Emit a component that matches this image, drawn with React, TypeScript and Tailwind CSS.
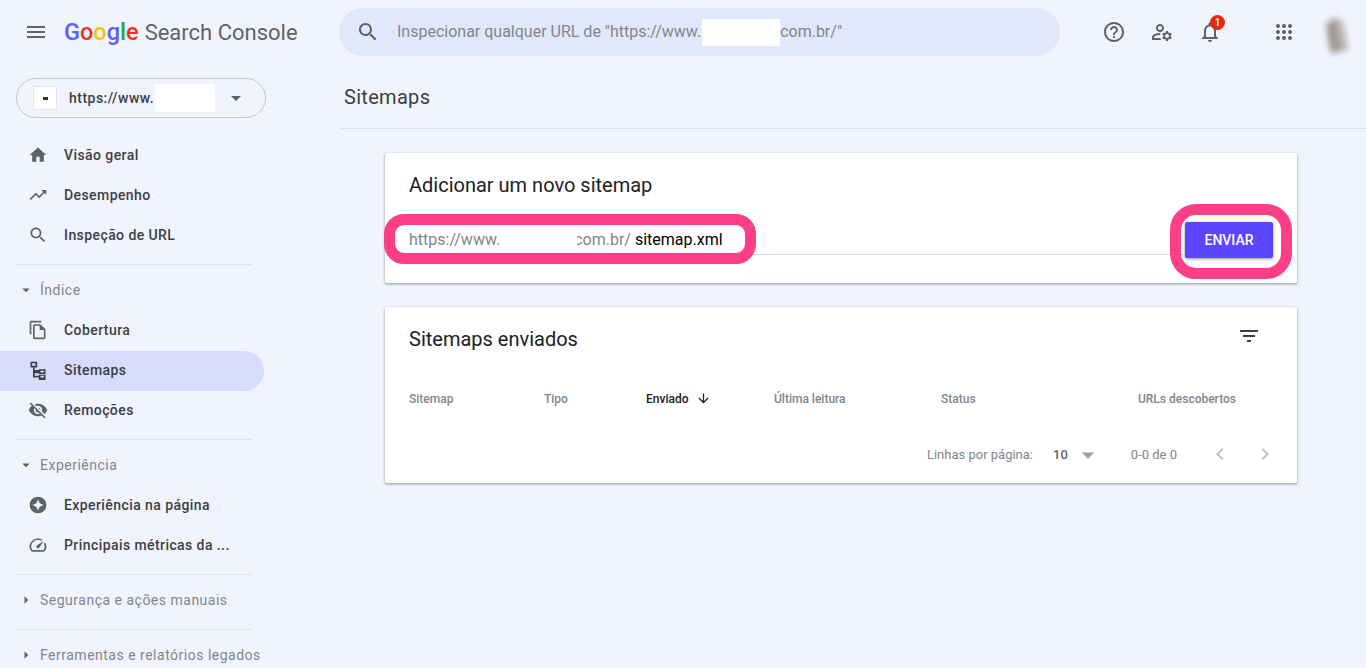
import type { ReactNode } from "react";

const paths = {
  home: "M10 20v-6h4v6h5v-8h3L12 3 2 12h3v8z",
  trend: "M16 6l2.29 2.29-4.88 4.88-4-4L2 16.59 3.41 18l6-6 4 4 6.3-6.29L22 12V6z",
  search: "M15.5 14h-.79l-.28-.27C15.41 12.59 16 11.11 16 9.5 16 5.91 13.09 3 9.5 3S3 5.91 3 9.5 5.91 16 9.5 16c1.61 0 3.09-.59 4.23-1.57l.27.28v.79l5 4.99L20.49 19l-4.99-5zm-6 0C7.01 14 5 11.99 5 9.5S7.01 5 9.5 5 14 7.01 14 9.5 11.99 14 9.5 14z",
  copy: "M16 1H4c-1.1 0-2 .9-2 2v14h2V3h12V1zm-1 4H8c-1.1 0-1.99.9-1.99 2L6 21c0 1.1.89 2 1.99 2H19c1.1 0 2-.9 2-2V11l-6-6zM8 21V7h6v5h5v9H8z",
  sitemap: "M3 2h8v7H8v3h5v-1h8v6h-8v-1H8v3h5v-1h8v6h-8v-3H6V9H3V2zm2 2v3h4V4H5zm10 9v2h4v-2h-4zm0 6v2h4v-2h-4z",
  eyeOff: "M12 7c2.76 0 5 2.24 5 5 0 .65-.13 1.26-.36 1.83l2.92 2.92c1.51-1.26 2.7-2.89 3.43-4.75-1.73-4.39-6-7.5-11-7.5-1.4 0-2.74.25-3.98.7l2.16 2.16C10.74 7.13 11.35 7 12 7zM2 4.27l2.28 2.28.46.46C3.08 8.3 1.78 10.02 1 12c1.73 4.39 6 7.5 11 7.5 1.55 0 3.03-.3 4.38-.84l.42.42L19.73 22 21 20.73 3.27 3 2 4.27zM7.53 9.8l1.55 1.55c-.05.21-.08.43-.08.65 0 1.66 1.34 3 3 3 .22 0 .44-.03.65-.08l1.55 1.55c-.67.33-1.41.53-2.2.53-2.76 0-5-2.24-5-5 0-.79.2-1.53.53-2.2zm4.31-.78l3.15 3.15.02-.16c0-1.66-1.34-3-3-3l-.17.01z",
  star: "M12 2a10 10 0 1 0 0 20 10 10 0 0 0 0-20zm0 3.5l2 4.5 4.5 2-4.5 2-2 4.5-2-4.5-4.5-2 4.5-2z",
  gauge: "M20.38 8.57l-1.23 1.85a8 8 0 0 1-.22 7.58H5.07A8 8 0 0 1 15.58 6.85l1.85-1.23A10 10 0 0 0 3.35 19a2 2 0 0 0 1.72 1h13.85a2 2 0 0 0 1.74-1 10 10 0 0 0-.27-10.44zM10.59 15.41a2 2 0 0 0 2.83 0l5.66-8.49-8.49 5.66a2 2 0 0 0 0 2.83z",
  help: "M11 18h2v-2h-2v2zm1-16C6.48 2 2 6.48 2 12s4.48 10 10 10 10-4.48 10-10S17.52 2 12 2zm0 18c-4.41 0-8-3.59-8-8s3.59-8 8-8 8 3.59 8 8-3.59 8-8 8zm0-14c-2.21 0-4 1.79-4 4h2c0-1.1.9-2 2-2s2 .9 2 2c0 2-3 1.75-3 5h2c0-2.25 3-2.5 3-5 0-2.21-1.79-4-4-4z",
  manage: "M4 18v-.65c0-.34.16-.66.41-.81C6.1 15.53 8.03 15 10 15c.03 0 .05 0 .08.01.1-.7.3-1.37.59-1.98-.22-.02-.44-.03-.67-.03-2.42 0-4.68.67-6.61 1.82-.88.52-1.39 1.5-1.39 2.53V20h9.26c-.42-.6-.75-1.28-.97-2H4zM10 12c2.21 0 4-1.79 4-4s-1.79-4-4-4-4 1.79-4 4 1.79 4 4 4zm0-6c1.1 0 2 .9 2 2s-.9 2-2 2-2-.9-2-2 .9-2 2-2zM20.75 16c0-.22-.03-.42-.06-.63l1.14-1.01-1-1.73-1.45.49c-.32-.27-.68-.48-1.08-.63L18 11h-2l-.3 1.49c-.4.15-.76.36-1.08.63l-1.45-.49-1 1.73 1.14 1.01c-.03.21-.06.41-.06.63s.03.42.06.63l-1.14 1.01 1 1.73 1.45-.49c.32.27.68.48 1.08.63L16 21h2l.3-1.49c.4-.15.76-.36 1.08-.63l1.45.49 1-1.73-1.14-1.01c.03-.21.06-.41.06-.63zM17 18c-1.1 0-2-.9-2-2s.9-2 2-2 2 .9 2 2-.9 2-2 2z",
  bell: "M12 22c1.1 0 2-.9 2-2h-4c0 1.1.9 2 2 2zm6-6v-5c0-3.07-1.63-5.64-4.5-6.32V4c0-.83-.67-1.5-1.5-1.5s-1.5.67-1.5 1.5v.68C7.64 5.36 6 7.92 6 11v5l-2 2v1h16v-1l-2-2zm-2 1H8v-6c0-2.48 1.51-4.5 4-4.5s4 2.02 4 4.5v6z",
  filter: "M10 18h4v-2h-4v2zM3 6v2h18V6H3zm3 7h12v-2H6v2z",
  arrowDown: "M20 12l-1.41-1.41L13 16.17V4h-2v12.17l-5.58-5.59L4 12l8 8 8-8z",
  menu: "M3 18h18v-2H3v2zm0-5h18v-2H3v2zm0-7v2h18V6H3z",
  left: "M15.41 7.41L14 6l-6 6 6 6 1.41-1.41L10.83 12z",
  right: "M10 6L8.59 7.41 13.17 12l-4.58 4.59L10 18l6-6z",
  caretDown: "M7 10l5 5 5-5z",
  caretRight: "M10 17l5-5-5-5z",
};

function Icon({ d, className }: { d: string; className?: string }) {
  return (
    <svg viewBox="0 0 24 24" fill="currentColor" fillRule="evenodd" className={className}>
      <path d={d} />
    </svg>
  );
}

function NavItem({ icon, label, active }: { icon: string; label: string; active?: boolean }) {
  return (
    <div
      className={`flex h-10 w-[264px] items-center rounded-r-full pl-[26px] ${active ? "mt-px -mb-px bg-[#d5dcfc] pb-[2px]" : ""}`}
    >
      <Icon d={icon} className={`h-[20px] w-[24px] shrink-0 ${active ? "text-[#3c4043]" : "text-[#5f6368]"}`} />
      <span className="ml-[14px] whitespace-nowrap text-sm font-[480] tracking-[0.42px] text-[#3c4043]">{label}</span>
    </div>
  );
}

function Section({ label, open }: { label: string; open?: boolean }) {
  return (
    <div className="flex h-[50px] items-center pl-[14px]">
      <Icon d={open ? paths.caretDown : paths.caretRight} className="h-6 w-6 shrink-0 scale-75 text-[#5f6368]" />
      <span className="ml-[2px] whitespace-nowrap text-sm tracking-[0.5px] text-[#80868b]">{label}</span>
    </div>
  );
}

function Divider() {
  return <div className="ml-4 h-px w-[236px] bg-[#e0e3ea]" />;
}

function Card({ className, children }: { className?: string; children: ReactNode }) {
  return (
    <section className={`relative rounded-[2px] bg-white pl-6 shadow-[0_1px_3px_rgba(60,64,67,0.55)] ${className ?? ""}`}>
      {children}
    </section>
  );
}

function Header() {
  return (
    <header className="flex h-16 shrink-0 items-center">
      <Icon d={paths.menu} className="ml-[24px] h-6 w-6 text-[#5f6368]" />
      <div className="ml-[16px] mt-[2px] flex w-[275px] items-baseline leading-none">
        <span className="text-[23.5px] leading-none font-medium">
          <span className="text-[#5b5fff]">G</span>
          <span className="text-[#ea3323]">o</span>
          <span className="text-[#f6c400]">o</span>
          <span className="text-[#5b5fff]">g</span>
          <span className="text-[#1fa84f]">l</span>
          <span className="text-[#ea3323]">e</span>
        </span>
        <span className="ml-[6px] text-[22px] text-[#5f6368]">Search Console</span>
      </div>
      <div className="flex h-12 w-[721px] items-center rounded-3xl bg-[#e2e8fb] pl-[17px]">
        <Icon d={paths.search} className="h-6 w-6 text-[#5f6368]" />
        <span className="ml-[17px] whitespace-nowrap text-base text-[#80868b]">Inspecionar qualquer URL de "https://www.</span>
        <span className="ml-px h-[27px] w-[78px] bg-white" />
        <span className="whitespace-nowrap text-base text-[#80868b]">com.br/"</span>
      </div>
      <Icon d={paths.help} className="ml-[42px] h-6 w-6 text-[#5f6368]" />
      <Icon d={paths.manage} className="ml-[24px] h-6 w-6 text-[#5f6368]" />
      <div className="relative ml-[24px] h-6 w-6">
        <Icon d={paths.bell} className="h-6 w-6 text-[#5f6368]" />
        <span className="absolute -top-[5px] left-[12px] flex h-[15px] w-[15px] items-center justify-center rounded-full bg-[#e52a12] text-[10px] font-medium text-white">
          1
        </span>
      </div>
      <div className="ml-[54px] grid h-4 w-4 grid-cols-3 gap-[2px]">
        {[0, 1, 2, 3, 4, 5, 6, 7, 8].map((i) => (
          <span key={i} className="h-[4px] w-[4px] rounded-full bg-[#5f6368]" />
        ))}
      </div>
      <div className="ml-[36px] mt-[5px] h-[34px] w-[18px] rotate-[-10deg] rounded-t-full rounded-b-[5px] bg-gradient-to-r from-[#8a8580] to-[#c9c6c4] blur-[3px]" />
    </header>
  );
}

function Sidebar() {
  return (
    <aside className="w-[280px] shrink-0 overflow-hidden">
      <div className="ml-4 mt-[14px] flex h-10 w-[250px] items-center rounded-full border border-[#c4c7cc] pl-[16px]">
        <div className="flex h-6 w-6 items-center justify-center border border-[#e4e4e4] bg-white">
          <span className="h-[3px] w-[5px] bg-[#333]" />
        </div>
        <span className="ml-3 whitespace-nowrap text-sm font-[480] tracking-[0.48px] text-[#3c4043]">https://www.</span>
        <span className="ml-[1px] h-[28px] w-[60px] bg-white" />
        <Icon d={paths.caretDown} className="ml-[9px] h-6 w-6 text-[#5f6368]" />
      </div>
      <nav className="mt-[17px]">
        <NavItem icon={paths.home} label="Visão geral" />
        <NavItem icon={paths.trend} label="Desempenho" />
        <NavItem icon={paths.search} label="Inspeção de URL" />
        <div className="mt-[9px]" />
        <Divider />
        <Section label="Índice" open />
        <div className="-mt-[5px]" />
        <NavItem icon={paths.copy} label="Cobertura" />
        <NavItem icon={paths.sitemap} label="Sitemaps" active />
        <NavItem icon={paths.eyeOff} label="Remoções" />
        <div className="mt-[9px]" />
        <Divider />
        <Section label="Experiência" open />
        <div className="-mt-[5px]" />
        <NavItem icon={paths.star} label="Experiência na página" />
        <NavItem icon={paths.gauge} label="Principais métricas da ..." />
        <div className="mt-[9px]" />
        <Divider />
        <Section label="Segurança e ações manuais" />
        <div className="mt-[4px]" />
        <Divider />
        <Section label="Ferramentas e relatórios legados" />
      </nav>
    </aside>
  );
}

export default function App() {
  return (
    <div className="flex h-[668px] w-[1366px] flex-col overflow-hidden bg-[#f1f4ff] font-['Roboto',sans-serif]">
      <Header />
      <div className="flex min-h-0 flex-1">
        <Sidebar />
        <main className="flex-1 pl-[60px]">
          <div className="flex h-[65px] items-center border-b border-[#dfe1e6] pl-1 pt-[2px] text-xl tracking-[0.3px] text-[#3c4043]">Sitemaps</div>
          <div className="ml-[45px] mr-[69px] mt-6 flex flex-col gap-6">
            <Card className="h-[130px]">
              <h2 className="pt-[19px] text-xl leading-[26px] text-[#202124]">Adicionar um novo sitemap</h2>
              <div className="mt-6 flex items-start pr-6">
                <div className="flex h-[33px] flex-1 items-center border-b border-[#dadce0] pt-[3px]">
                  <span className="text-base text-[#80868b]">https://www.</span>
                  <span className="ml-[74px] text-base text-[#80868b] [clip-path:inset(0_0_0_3px)]">com.br/</span>
                  <span className="ml-1 text-base text-black">sitemap.xml</span>
                </div>
                <button
                  type="button"
                  className="h-9 w-[88px] rounded-[2px] bg-[#5c45ff] text-sm font-medium text-white shadow-[0_1px_3px_rgba(60,64,67,0.6)]"
                >
                  ENVIAR
                </button>
              </div>
              <div className="absolute left-[-1px] top-[61px] h-[50px] w-[372px] rounded-[20px] border-[11px] border-[#fd3f88]" />
              <div className="absolute left-[785px] top-[51px] h-[75px] w-[122px] rounded-[26px] border-[11px] border-[#fd3f88]" />
            </Card>
            <Card className="h-[176px]">
              <div className="flex h-[64px] items-center justify-between pr-[36px]">
                <h2 className="text-xl text-[#202124]">Sitemaps enviados</h2>
                <Icon d={paths.filter} className="mt-[-6px] h-6 w-6 text-[#3c4043]" />
              </div>
              <div className="mt-2 grid h-[40px] grid-cols-[135px_102px_128px_167px_1fr] items-center pr-[61px] text-xs font-medium text-[#80868b]">
                <span>Sitemap</span>
                <span>Tipo</span>
                <span className="flex items-center text-[#202124]">
                  Enviado
                  <Icon d={paths.arrowDown} className="ml-[7px] -mt-[2px] h-[15px] w-[15px]" />
                </span>
                <span>Última leitura</span>
                <span className="flex justify-between">
                  <span>Status</span>
                  <span>URLs descobertos</span>
                </span>
              </div>
              <div className="mt-6 flex h-6 items-center justify-end text-[13px] text-[#80868b]">
                <span>Linhas por página:</span>
                <span className="ml-5 font-medium text-[#5f6368]">10</span>
                <Icon d={paths.caretDown} className="ml-2 h-6 w-6 scale-125 text-[#9aa0a6]" />
                <span className="ml-[31px]">0-0 de 0</span>
                <Icon d={paths.left} className="ml-[31px] -mt-[2px] h-6 w-6 text-[#bdc1c6]" />
                <Icon d={paths.right} className="ml-[21px] mr-5 -mt-[2px] h-6 w-6 text-[#bdc1c6]" />
              </div>
            </Card>
          </div>
        </main>
      </div>
    </div>
  );
}
